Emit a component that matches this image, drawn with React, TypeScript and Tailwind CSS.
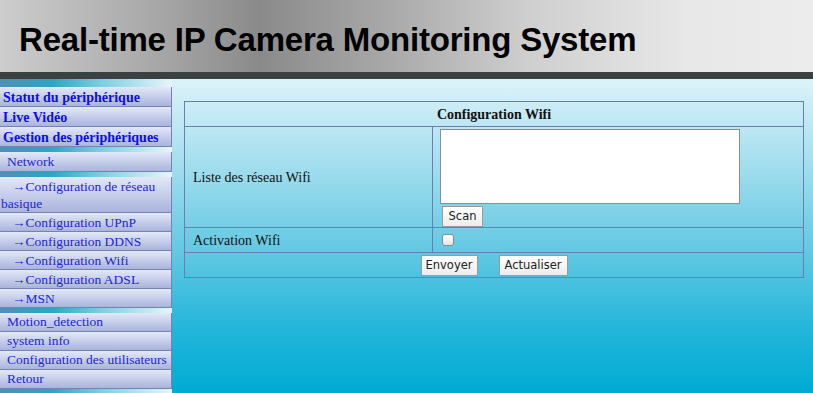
import React from "react";

const serif = { fontFamily: '"Liberation Serif", "Times New Roman", serif' };

function Strip({ h }: { h: string }) {
  return (
    <div
      className={`${h} w-full bg-[linear-gradient(to_right,#4f8fb8_0%,#2aa6c4_30%,#7fd0e2_60%,#e6f6fa_100%)]`}
    />
  );
}

function Item({
  children,
  bold,
  indent,
  tall,
}: {
  children: React.ReactNode;
  bold?: boolean;
  indent?: boolean;
  tall?: boolean;
}) {
  return (
    <div
      className={`w-[172px] border-b border-r border-[#7583b4] bg-[linear-gradient(to_bottom,#e3e8f8,#aab4dc)] ${
        bold
          ? "pl-[3px] text-[14px] font-bold text-[#0c0cf0] leading-[21px] h-[20px]"
          : indent
          ? "pl-[1px] text-[13.5px] text-[#2323d8] leading-[17px] min-h-[19px] pt-[1px]"
          : tall
          ? "pl-[7px] text-[13.5px] text-[#2323d8] leading-[20px] h-[20px]"
          : "pl-[7px] text-[13.5px] text-[#2323d8] leading-[18px] h-[19px]"
      }`}
      style={serif}
    >
      {indent ? <span className="inline-block w-[11px]" /> : null}
      {children}
    </div>
  );
}

function Btn({ children, w }: { children: React.ReactNode; w: string }) {
  return (
    <button
      className={`${w} h-[21px] border border-[#9a9a9a] bg-[linear-gradient(to_bottom,#ffffff,#ececec)] text-[11.5px] leading-[19px] text-[#222] text-center`}
      style={{ fontFamily: '"DejaVu Sans", "Liberation Sans", sans-serif' }}
    >
      {children}
    </button>
  );
}

export default function App() {
  return (
    <div className="w-[813px] h-[393px] overflow-hidden flex flex-col">
      <div className="h-[73px] w-full bg-[linear-gradient(to_right,#cdcdcd_0%,#a6a6a6_20%,#8a8a8a_32%,#a9a9a9_48%,#cfcfcf_65%,#e8e8e8_85%,#ececec_100%)] flex items-end pl-[19px] pb-[16px]">
        <h1
          className="text-[33px] font-bold text-black leading-none tracking-[-0.2px]"
          style={{ fontFamily: '"Liberation Sans", Arial, sans-serif' }}
        >
          Real-time IP Camera Monitoring System
        </h1>
      </div>
      <div className="h-[7px] w-full bg-[#3b4141]" />
      <div className="flex-1 flex bg-[linear-gradient(to_bottom,#dcf2f9_0%,#a8e0ef_25%,#62c8e3_55%,#22b5da_80%,#00abd4_100%)]">
        <div className="w-[172px] flex flex-col">
          <Strip h="h-[8px]" />
          <Item bold>Statut du périphérique</Item>
          <Item bold>Live Vidéo</Item>
          <Item bold>Gestion des périphériques</Item>
          <Strip h="h-[5px]" />
          <Item tall>Network</Item>
          <Strip h="h-[5px]" />
          <Item indent>→Configuration de réseau basique</Item>
          <Item indent>→Configuration UPnP</Item>
          <Item indent>→Configuration DDNS</Item>
          <Item indent>→Configuration Wifi</Item>
          <Item indent>→Configuration ADSL</Item>
          <Item indent>→MSN</Item>
          <Strip h="h-[5px]" />
          <Item>Motion_detection</Item>
          <Item>system info</Item>
          <Item>Configuration des utilisateurs</Item>
          <Item>Retour</Item>
          <Strip h="h-[4px]" />
        </div>
        <div className="flex-1 pl-[12px] pt-[22px] pr-[9px]">
          <table className="w-[620px] border-collapse border border-[#6d7db0] text-[14px] text-[#111]" style={serif}>
            <tbody>
              <tr className="h-[25px]">
                <td colSpan={2} className="border border-[#6d7db0] text-center font-bold">
                  Configuration Wifi
                </td>
              </tr>
              <tr className="h-[100px]">
                <td className="w-[248px] border border-[#6d7db0] pl-[8px]">Liste des réseau Wifi</td>
                <td className="border border-[#6d7db0] pl-[7px] pt-[2px] align-top">
                  <div className="w-[300px] h-[75px] bg-white border border-[#8c8c8c]" />
                  <div className="pl-[2px] mt-[1px]">
                    <Btn w="w-[41px]">Scan</Btn>
                  </div>
                </td>
              </tr>
              <tr className="h-[25px]">
                <td className="border border-[#6d7db0] pl-[8px]">Activation Wifi</td>
                <td className="border border-[#6d7db0] pl-[9px]">
                  <div className="w-[12px] h-[12px] rounded-[3px] border border-[#8a8a8a] bg-[linear-gradient(to_bottom,#ffffff,#e6e6e6)]" />
                </td>
              </tr>
              <tr className="h-[25px]">
                <td colSpan={2} className="border border-[#6d7db0] text-center">
                  <div className="flex justify-center gap-[21px]">
                    <Btn w="w-[57px]">Envoyer</Btn>
                    <Btn w="w-[69px]">Actualiser</Btn>
                  </div>
                </td>
              </tr>
            </tbody>
          </table>
        </div>
      </div>
    </div>
  );
}
